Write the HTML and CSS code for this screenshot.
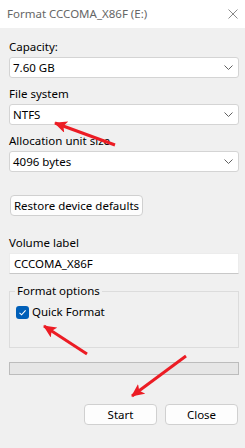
FILE: index.html
```html
<!DOCTYPE html>
<html lang="en">
  <head>
    <meta charset="UTF-8" />
    <meta name="viewport" content="width=device-width, initial-scale=1.0" />
    <title>Format CCCOMA_X86F (E:)</title>
    <link rel="stylesheet" href="styles.css">
  </head>
  <body>
    <div class="titlebar">
      <span class="title">Format CCCOMA_X86F (E:)</span>
      <svg class="close-x" width="10" height="10" viewBox="0 0 10 10">
        <path d="M0.5 0.5 L9.5 9.5 M9.5 0.5 L0.5 9.5" stroke="#8a8a8a" stroke-width="1" fill="none" />
      </svg>
    </div>

    <div class="dialog">
      <div class="field first">
        <label>Capacity:</label>
        <div class="combo">
          <span>7.60 GB</span>
          <svg class="chev" width="9" height="5" viewBox="0 0 9 5"><path d="M0.5 0.5 L4.5 4.5 L8.5 0.5" stroke="#606060" fill="none" /></svg>
        </div>
      </div>

      <div class="field">
        <label>File system</label>
        <div class="combo">
          <span>NTFS</span>
          <svg class="chev" width="9" height="5" viewBox="0 0 9 5"><path d="M0.5 0.5 L4.5 4.5 L8.5 0.5" stroke="#606060" fill="none" /></svg>
        </div>
      </div>

      <div class="field">
        <label>Allocation unit size</label>
        <div class="combo">
          <span>4096 bytes</span>
          <svg class="chev" width="9" height="5" viewBox="0 0 9 5"><path d="M0.5 0.5 L4.5 4.5 L8.5 0.5" stroke="#606060" fill="none" /></svg>
        </div>
      </div>

      <button class="btn btn-restore">Restore device defaults</button>

      <div class="field volume">
        <label>Volume label</label>
        <div class="textbox">CCCOMA_X86F</div>
      </div>

      <fieldset class="options">
        <legend>Format options</legend>
        <div class="check-row">
          <span class="checkbox">
            <svg width="13" height="13" viewBox="0 0 13 13"><path d="M3.5 6.8 L5.6 8.8 L9.6 4.4" stroke="#fff" stroke-width="1.1" fill="none" /></svg>
          </span>
          <span>Quick Format</span>
        </div>
      </fieldset>

      <div class="progress"></div>

      <div class="actions">
        <button class="btn btn-action">Start</button>
        <button class="btn btn-action">Close</button>
      </div>
    </div>

    <!-- annotation arrows drawn over the dialog -->
    <svg class="arrows" width="245" height="448" viewBox="0 0 245 448">
      <defs>
        <marker id="head" markerUnits="userSpaceOnUse" markerWidth="14" markerHeight="12" refX="12" refY="6" orient="auto">
          <path d="M0 0 L13 6 L0 12 L3 6 Z" fill="#ec1c24" />
        </marker>
      </defs>
      <line x1="115" y1="145" x2="55" y2="123" stroke="#ec1c24" stroke-width="3" marker-end="url(#head)" />
      <line x1="87" y1="354" x2="44" y2="326" stroke="#ec1c24" stroke-width="3" marker-end="url(#head)" />
      <line x1="186" y1="356" x2="132" y2="396" stroke="#ec1c24" stroke-width="3" marker-end="url(#head)" />
    </svg>
  </body>
</html>
```

FILE: styles.css
```css
* {
  box-sizing: border-box;
  margin: 0;
  padding: 0;
}

body {
  width: 245px;
  height: 448px;
  background-color: #f0f0f0;
  font-family: "Noto Sans", Arial, sans-serif;
  font-size: 11.5px;
  color: #000;
  position: relative;
  overflow: hidden;
}

.titlebar {
  height: 28px;
  background: #fff;
  display: flex;
  align-items: center;
  justify-content: space-between;
  padding: 0 7px 0 7px;
}

.title {
  color: #666;
  line-height: 16px;
}

.dialog {
  padding: 11px 6px 0 9px;
}

.field {
  margin-top: 8px;
}

.field.first {
  margin-top: 0;
}

.field label {
  display: block;
  line-height: 16px;
  margin-bottom: 2px;
}

.combo {
  height: 21px;
  background: #fff;
  border: 1px solid #d4d4d4;
  border-radius: 3px;
  display: flex;
  align-items: center;
  justify-content: space-between;
  padding: 0 5px 0 3px;
}

.btn {
  font-family: inherit;
  font-size: 11.5px;
  color: #000;
  height: 21px;
  background: #fdfdfd;
  border: 1px solid #d0d0d0;
  border-radius: 4px;
  display: block;
}

.btn-restore {
  margin-top: 23px;
  margin-left: 1px;
  width: 133px;
}

.field.volume {
  margin-top: 19px;
}

.textbox {
  height: 21px;
  background: #fff;
  border: 1px solid #ececec;
  border-bottom-color: #c8c8c8;
  padding: 0 4px;
  line-height: 19px;
}

.options {
  margin-top: 9px;
  border: 1px solid #dcdcdc;
  padding: 0 0 27px 5px;
}

.options legend {
  padding: 0 2px;
  line-height: 16px;
}

.check-row {
  margin-top: 5px;
  display: flex;
  align-items: center;
  gap: 3px;
  line-height: 16px;
}

.checkbox {
  width: 13px;
  height: 13px;
  margin-left: 1px;
  background: #005fb8;
  border-radius: 3px;
  display: flex;
}

.progress {
  margin-top: 14px;
  height: 13px;
  background: #e6e6e6;
  border: 1px solid #bcbcbc;
}

.actions {
  margin-top: 29px;
  display: flex;
  justify-content: flex-end;
  gap: 8px;
  padding-right: 1px;
}

.btn-action {
  width: 73px;
}

.arrows {
  position: absolute;
  left: 0;
  top: 0;
  pointer-events: none;
}
```
